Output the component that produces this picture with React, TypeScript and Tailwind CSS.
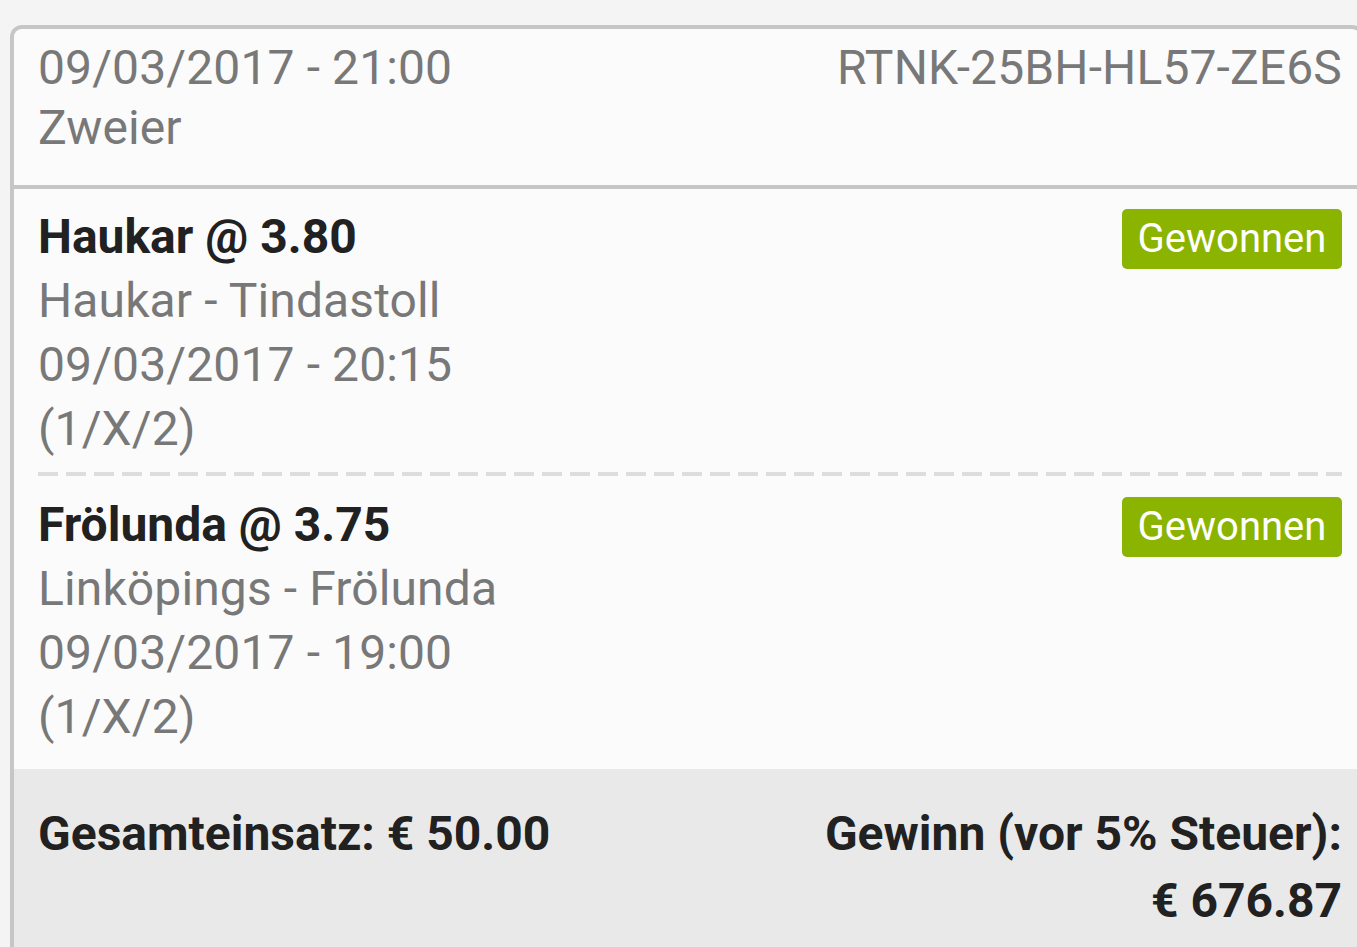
import * as React from "react";

type Leg = {
  pick: string;
  odds: string;
  match: string;
  date: string;
  market: string;
};

const LEGS: Leg[] = [
  {
    pick: "Haukar",
    odds: "3.80",
    match: "Haukar - Tindastoll",
    date: "09/03/2017 - 20:15",
    market: "(1/X/2)",
  },
  {
    pick: "Frölunda",
    odds: "3.75",
    match: "Linköpings - Frölunda",
    date: "09/03/2017 - 19:00",
    market: "(1/X/2)",
  },
];

function LegRow({ leg, last }: { leg: Leg; last: boolean }) {
  return (
    <div className={last ? "pt-[17px] pb-[20px]" : "pt-4"}>
      <div className="flex items-start justify-between">
        <div className="text-[48px] leading-[64px]">
          <div className="font-bold text-[#212121]">
            {leg.pick} @ {leg.odds}
          </div>
          <div className="tracking-[0.12px] text-[#787878]">{leg.match}</div>
          <div className="tracking-[0.12px] text-[#787878]">{leg.date}</div>
          <div className="tracking-[0.12px] text-[#787878]">{leg.market}</div>
        </div>
        <span className="mt-1 flex h-[60px] w-[220px] items-center justify-center rounded-[5px] bg-[#8ab400] text-[40px] text-white">
          Gewonnen
        </span>
      </div>
      {!last && (
        <div className="mt-[11px] h-[4px] w-full bg-[repeating-linear-gradient(90deg,#dddddd_0px,#dddddd_20px,transparent_20px,transparent_28px)]" />
      )}
    </div>
  );
}

export default function App() {
  return (
    <div
      className="flex h-[947px] w-full overflow-hidden bg-[#f4f4f4] pt-[25px]"
      style={{ fontFamily: "Roboto, 'Liberation Sans', sans-serif" }}
    >
      <div className="ml-[10px] flex w-[1354px] shrink-0 flex-col rounded-t-[12px] border-x-4 border-t-4 border-[#c6c6c6] bg-[#fbfbfb]">
        {/* head */}
        <div className="flex justify-between border-b-4 border-[#c6c6c6] pt-[9px] pb-[27px] pl-[24px] pr-[18px] text-[48px] leading-[60px] tracking-[0.12px] text-[#787878]">
          <div>
            <div>09/03/2017 - 21:00</div>
            <div>Zweier</div>
          </div>
          <div>RTNK-25BH-HL57-ZE6S</div>
        </div>

        <div className="pl-[24px] pr-[18px]">
          {LEGS.map((leg, i) => (
            <LegRow key={leg.pick} leg={leg} last={i === LEGS.length - 1} />
          ))}
        </div>

        {/* totals */}
        <div className="flex flex-1 justify-between bg-[#e9e9e9] pt-[31px] pl-[24px] pr-[18px] text-[48px] font-bold leading-[67px] text-[#212121]">
          <div>Gesamteinsatz: € 50.00</div>
          <div className="text-right">
            <div>Gewinn (vor 5% Steuer):</div>
            <div>€ 676.87</div>
          </div>
        </div>
      </div>
    </div>
  );
}
